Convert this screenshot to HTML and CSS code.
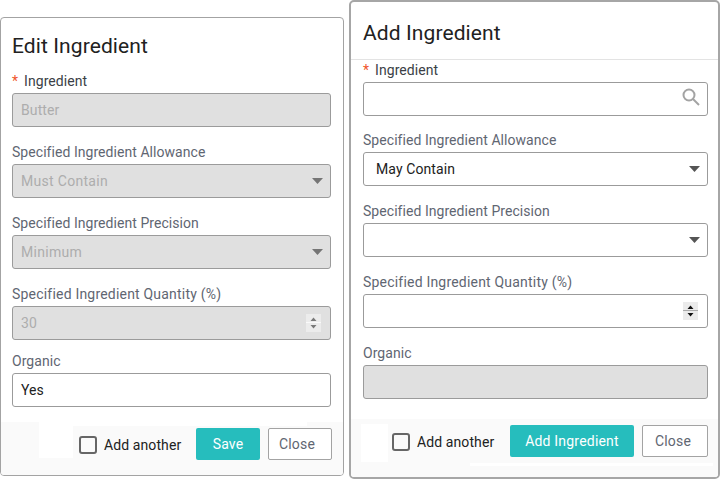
FILE: index.html
```html
<!DOCTYPE html>
<html lang="en">
<head>
<meta charset="utf-8">
<title>Ingredient dialogs</title>
<link rel="stylesheet" href="styles.css">
</head>
<body>
<main class="stage">
  <section class="card card-edit">
    <h2 class="title title-edit">Edit Ingredient</h2>
    <div class="body">
      <div class="field f-first">
        <div class="label"><span class="req">*</span>Ingredient</div>
        <div class="control disabled">Butter</div>
      </div>
      <div class="field">
        <div class="label">Specified Ingredient Allowance</div>
        <div class="control disabled wide">Must Contain<svg class="caret" width="11" height="6" viewBox="0 0 11 6"><path d="M0 0h11L5.500 6z"/></svg></div>
      </div>
      <div class="field">
        <div class="label">Specified Ingredient Precision</div>
        <div class="control disabled wide">Minimum<svg class="caret" width="11" height="6" viewBox="0 0 11 6"><path d="M0 0h11L5.500 6z"/></svg></div>
      </div>
      <div class="field">
        <div class="label label-wide">Specified Ingredient Quantity (%)</div>
        <div class="control disabled">30<span class="spin spin-off"><svg width="15" height="18" viewBox="0 0 15 18"><path d="M4.500 7L7.500 3.500 10.500 7zM4.500 11h6l-3 3.500z"/></svg></span></div>
      </div>
      <div class="field f-short">
        <div class="label">Organic</div>
        <div class="control">Yes</div>
      </div>
    </div>
    <footer class="foot foot-edit">
      <span class="box"></span><span class="another">Add another</span>
      <button class="btn primary save">Save</button>
      <button class="btn ghost close-edit">Close</button>
    </footer>
  </section>
  <section class="card card-add">
    <h2 class="title title-add">Add Ingredient</h2>
    <div class="body body-add">
      <div class="field f-first">
        <div class="label"><span class="req">*</span>Ingredient</div>
        <div class="control"><svg class="search" width="18" height="18" viewBox="0 0 18 18"><circle cx="7" cy="7" r="5.500"/><path d="M11 11l6 6"/></svg></div>
      </div>
      <div class="field f-tight">
        <div class="label">Specified Ingredient Allowance</div>
        <div class="control value">May Contain<svg class="caret dark" width="11" height="6" viewBox="0 0 11 6"><path d="M0 0h11L5.500 6z"/></svg></div>
      </div>
      <div class="field">
        <div class="label">Specified Ingredient Precision</div>
        <div class="control value"><svg class="caret dark" width="11" height="6" viewBox="0 0 11 6"><path d="M0 0h11L5.500 6z"/></svg></div>
      </div>
      <div class="field">
        <div class="label label-wide">Specified Ingredient Quantity (%)</div>
        <div class="control value"><span class="spin"><svg width="15" height="18" viewBox="0 0 15 18"><path d="M4.500 7L7.500 3.500 10.500 7zM4.500 11h6l-3 3.500z"/></svg></span></div>
      </div>
      <div class="field">
        <div class="label">Organic</div>
        <div class="control disabled"></div>
      </div>
    </div>
    <footer class="foot foot-add">
      <span class="box"></span><span class="another">Add another</span>
      <button class="btn primary add">Add Ingredient</button>
      <button class="btn ghost close-add">Close</button>
    </footer>
  </section>
</main>
</body>
</html>
```
FILE: styles.css
```css
* { box-sizing: border-box; }
html, body { margin: 0; padding: 0; background: #fff; }
body { font-family: Roboto, "Liberation Sans", Arial, sans-serif; width: 720px; height: 479px; overflow: hidden; }
.stage { display: flex; align-items: flex-start; width: 720px; height: 479px; }
.card { display: flex; flex-direction: column; background: #fff; overflow: hidden; }
.card-edit { width: 344px; height: 459px; margin-top: 17px; border: 1px solid #a3a3a3; border-radius: 4px; }
.card-add { width: 371px; height: 479px; margin-left: 5px; border: 2px solid #a6a6a6; border-radius: 5px; }
.title { margin: 0; font-weight: 400; font-size: 21px; line-height: 24px; letter-spacing: .1px; color: #212121; }
.title-edit { padding: 16px 11px 0; height: 54px; }
.title-add { padding: 19px 12px 0; height: 58px; border-bottom: 1px solid #e3e3e3; }
.body { padding: 0 12px 0 11px; flex: 1; }
.body-add { padding: 0 10px 0 12px; }
.field { display: flex; flex-direction: column; margin-top: 16px; }
.f-first { margin-top: 0; }
.body-add .f-first { margin-top: 1px; }
.body-add .f-tight { margin-top: 15px; }
.f-short { margin-top: 12px; }
.label { font-size: 14px; line-height: 18px; height: 21px; color: #5f6672; letter-spacing: .05px; }
.label-wide { letter-spacing: .2px; }
.f-first .label { color: #3b3f46; }
.req { color: #f0552b; margin-right: 6px; }
.control { position: relative; display: flex; align-items: center; height: 34px; padding-left: 8px; border: 1px solid #9b9b9b; border-radius: 3px; font-size: 14px; letter-spacing: .1px; color: #212121; background: #fff; }
.control.value { padding-left: 12px; }
.disabled { background: #e0e0e0; color: #adadad; }
.wide { letter-spacing: .3px; }
.caret { position: absolute; right: 7px; top: 13px; fill: #757575; }
.caret.dark { fill: #555; }
.search { position: absolute; right: 7px; top: 5px; fill: none; stroke: #a3a3a3; stroke-width: 2; }
.spin { position: absolute; right: 9px; top: 7px; width: 15px; height: 18px; background: #ebebeb; display: flex; }
.spin svg { fill: #111; }
.spin::after { content: ""; position: absolute; left: 0; right: 0; top: 8px; height: 1px; background: #aaa; }
.spin-off { background: #ececec; }
.spin-off svg { fill: #7a7a7a; }
.spin-off::after { background: #fafafa; }
.foot { position: relative; display: flex; align-items: center; background: #fafafa; flex: none; }
.foot::before, .foot::after { content: ""; position: absolute; background: #fff; }
.foot-edit { height: 53px; padding: 0 11px 10px 78px; }
.foot-edit::before { left: 38px; top: 0; width: 34px; height: 36px; }
.foot-edit::after { left: 72px; top: 0; width: 234px; height: 4px; }
.foot-add { height: 58px; padding: 0 10px 14px 41px; }
.foot-add::before { left: 10px; top: 5px; width: 27px; height: 38px; }
.foot-add::after { left: 119px; top: 44px; width: 243px; height: 3px; }
.box { width: 18px; height: 18px; border: 2px solid #666; border-radius: 3px; background: #fafafa; flex: none; margin-top: 2px; }
.another { font-size: 14px; color: #212121; margin-left: 7px; margin-top: 2px; letter-spacing: .1px; white-space: nowrap; }
.btn { height: 32px; font: inherit; font-size: 14px; letter-spacing: .2px; border-radius: 2px; padding: 0; flex: none; }
.primary { background: #26bdbd; color: #fff; border: 0; }
.ghost { background: #fff; color: #5f6672; border: 1px solid #a3a3a3; margin-left: 8px; }
.save { width: 64px; margin-left: auto; }
.close-edit { width: 64px; padding-right: 6px; }
.add { width: 124px; margin-left: auto; }
.close-add { width: 66px; padding-right: 4px; }
```
